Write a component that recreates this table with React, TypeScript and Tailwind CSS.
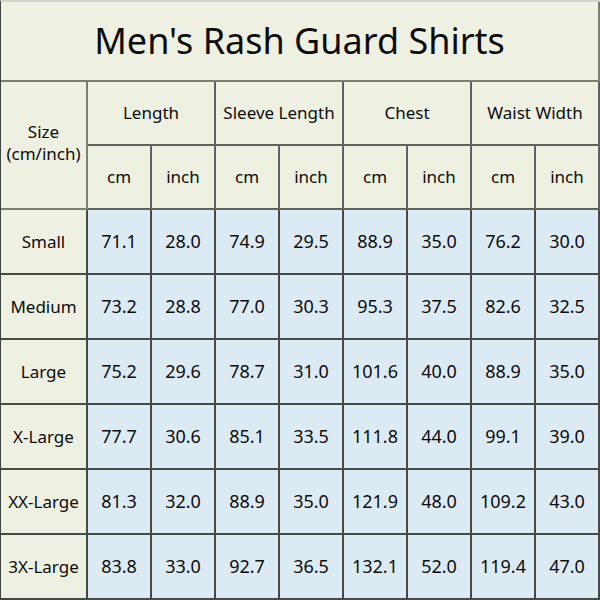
import React from "react";

const rows = [
  ["Small", "71.1", "28.0", "74.9", "29.5", "88.9", "35.0", "76.2", "30.0"],
  ["Medium", "73.2", "28.8", "77.0", "30.3", "95.3", "37.5", "82.6", "32.5"],
  ["Large", "75.2", "29.6", "78.7", "31.0", "101.6", "40.0", "88.9", "35.0"],
  ["X-Large", "77.7", "30.6", "85.1", "33.5", "111.8", "44.0", "99.1", "39.0"],
  ["XX-Large", "81.3", "32.0", "88.9", "35.0", "121.9", "48.0", "109.2", "43.0"],
  ["3X-Large", "83.8", "33.0", "92.7", "36.5", "132.1", "52.0", "119.4", "47.0"],
];

const groups = ["Length", "Sleeve Length", "Chest", "Waist Width"];

export default function App() {
  return (
    <div
      className="w-[600px] h-[600px] border-t-2 border-t-[#d2d2d0] border-l border-l-[#3c423c] bg-[#eef0e1] text-[#0c0c0c] grid grid-cols-[87px_repeat(8,64px)] grid-rows-[80px_64px_64px_repeat(6,65px)]"
      style={{ fontFamily: '"Noto Sans", "Open Sans", sans-serif' }}
    >
      <div className="col-span-9 flex items-center justify-center border-b-2 border-r-2 border-[#79806f] text-[36px] pb-[1px]">
        Men's Rash Guard Shirts
      </div>
      <div className="row-span-2 flex flex-col items-center justify-center border-b-2 border-r-2 border-[#79806f] text-[17px] leading-[22px] pb-[4px]">
        <span>Size</span>
        <span>(cm/inch)</span>
      </div>
      {groups.map((g) => (
        <div
          key={g}
          className="col-span-2 flex items-center justify-center border-b-2 border-r-2 border-[#5d645b] text-[17px]"
        >
          {g}
        </div>
      ))}
      {groups.map((g) => (
        <React.Fragment key={g + "u"}>
          <div className="flex items-center justify-center border-b-2 border-r-2 border-[#5d645b] text-[17px]">
            cm
          </div>
          <div className="flex items-center justify-center border-b-2 border-r-2 border-[#5d645b] text-[17px]">
            inch
          </div>
        </React.Fragment>
      ))}
      {rows.map((r) => (
        <React.Fragment key={r[0]}>
          <div className="flex items-center justify-center border-b-2 border-r-2 border-[#454c47] text-[17px]">
            {r[0]}
          </div>
          {r.slice(1).map((v, i) => (
            <div
              key={i}
              className="flex items-center justify-center bg-[#dcebf3] border-b-2 border-r-2 border-[#454c47] text-[18px]"
            >
              {v}
            </div>
          ))}
        </React.Fragment>
      ))}
    </div>
  );
}
